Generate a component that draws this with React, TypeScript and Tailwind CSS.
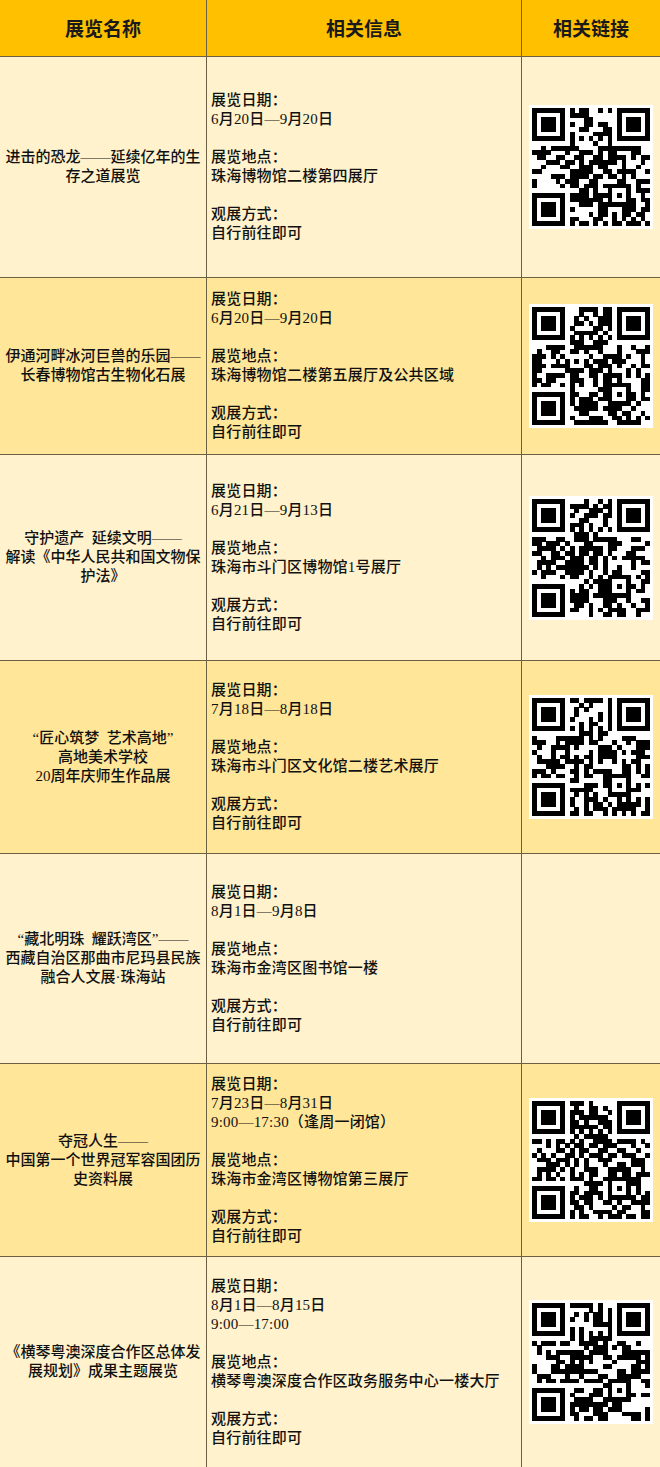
import React from "react";

type Row = {
  name: string[];
  info: string[];
  qr: number | null;
  h: number;
  alt: boolean;
};

const rows: Row[] = [
  {
    name: ["进击的恐龙——延续亿年的生", "存之道展览"],
    info: ["展览日期：", "6月20日—9月20日", "", "展览地点：", "珠海博物馆二楼第四展厅", "", "观展方式：", "自行前往即可"],
    qr: 11,
    h: 220,
    alt: false,
  },
  {
    name: ["伊通河畔冰河巨兽的乐园——", "长春博物馆古生物化石展"],
    info: ["展览日期：", "6月20日—9月20日", "", "展览地点：", "珠海博物馆二楼第五展厅及公共区域", "", "观展方式：", "自行前往即可"],
    qr: 23,
    h: 176,
    alt: true,
  },
  {
    name: ["守护遗产  延续文明——", "解读《中华人民共和国文物保", "护法》"],
    info: ["展览日期：", "6月21日—9月13日", "", "展览地点：", "珠海市斗门区博物馆1号展厅", "", "观展方式：", "自行前往即可"],
    qr: 37,
    h: 205,
    alt: false,
  },
  {
    name: ["“匠心筑梦  艺术高地”", "高地美术学校", "20周年庆师生作品展"],
    info: ["展览日期：", "7月18日—8月18日", "", "展览地点：", "珠海市斗门区文化馆二楼艺术展厅", "", "观展方式：", "自行前往即可"],
    qr: 41,
    h: 192,
    alt: true,
  },
  {
    name: ["“藏北明珠  耀跃湾区”——", "西藏自治区那曲市尼玛县民族", "融合人文展·珠海站"],
    info: ["展览日期：", "8月1日—9月8日", "", "展览地点：", "珠海市金湾区图书馆一楼", "", "观展方式：", "自行前往即可"],
    qr: null,
    h: 209,
    alt: false,
  },
  {
    name: ["夺冠人生——", "中国第一个世界冠军容国团历", "史资料展"],
    info: ["展览日期：", "7月23日—8月31日", "9:00—17:30（逢周一闭馆）", "", "展览地点：", "珠海市金湾区博物馆第三展厅", "", "观展方式：", "自行前往即可"],
    qr: 53,
    h: 192,
    alt: true,
  },
  {
    name: ["《横琴粤澳深度合作区总体发", "展规划》成果主题展览"],
    info: ["展览日期：", "8月1日—8月15日", "9:00—17:00", "", "展览地点：", "横琴粤澳深度合作区政务服务中心一楼大厅", "", "观展方式：", "自行前往即可"],
    qr: 67,
    h: 210,
    alt: false,
  },
];

function makeRng(seed: number) {
  let s = seed * 9301 + 49297;
  return () => {
    s = (s * 1103515245 + 12345) % 2147483648;
    return s / 2147483648;
  };
}

function QR({ seed }: { seed: number }) {
  const N = 25;
  const rnd = makeRng(seed);
  const cells: boolean[][] = [];
  for (let y = 0; y < N; y++) {
    cells.push([]);
    for (let x = 0; x < N; x++) cells[y].push(rnd() < 0.52);
  }
  const finder = (ox: number, oy: number) => {
    for (let y = -1; y < 8; y++)
      for (let x = -1; x < 8; x++) {
        const cx = ox + x;
        const cy = oy + y;
        if (cx < 0 || cy < 0 || cx >= N || cy >= N) continue;
        const inside = x >= 0 && x <= 6 && y >= 0 && y <= 6;
        let on = false;
        if (inside) {
          const ring = x === 0 || x === 6 || y === 0 || y === 6;
          const core = x >= 2 && x <= 4 && y >= 2 && y <= 4;
          on = ring || core;
        }
        cells[cy][cx] = on;
      }
  };
  finder(0, 0);
  finder(N - 7, 0);
  finder(0, N - 7);
  for (let y = 16; y <= 20; y++)
    for (let x = 16; x <= 20; x++) {
      const ring = x === 16 || x === 20 || y === 16 || y === 20;
      cells[y][x] = ring || (x === 18 && y === 18);
    }
  for (let i = 8; i < N - 8; i++) {
    cells[6][i] = i % 2 === 0;
    cells[i][6] = i % 2 === 0;
  }
  const m = 4.7;
  const pad = 3;
  const size = N * m + pad * 2;
  const rects: React.ReactElement[] = [];
  for (let y = 0; y < N; y++)
    for (let x = 0; x < N; x++)
      if (cells[y][x])
        rects.push(
          <rect key={`${x}-${y}`} x={pad + x * m} y={pad + y * m} width={m + 0.05} height={m + 0.05} fill="#000" />
        );
  return (
    <svg width={124} height={124} viewBox={`0 0 ${size} ${size}`} shapeRendering="crispEdges" className="block">
      <rect x={0} y={0} width={size} height={size} fill="#fff" />
      {rects}
    </svg>
  );
}

const textFont = { fontFamily: '"Liberation Serif", "Noto Sans CJK SC", serif' };

export default function App() {
  return (
    <div className="w-[660px] bg-[#fff2cc]" style={textFont}>
      <div className="grid grid-cols-[207px_315px_1fr] h-[57px] bg-[#ffc000] border-b border-[#6b6142] text-[#1a1a1a] text-[19px] font-bold" style={{ fontFamily: '"Noto Sans CJK SC", sans-serif' }}>
        <div className="flex items-center justify-center border-r border-[#6b6142]">展览名称</div>
        <div className="flex items-center justify-center border-r border-[#6b6142]">相关信息</div>
        <div className="flex items-center justify-center">相关链接</div>
      </div>
      {rows.map((r, i) => (
        <div
          key={i}
          className={`grid grid-cols-[207px_315px_1fr] border-b border-[#6b6142] text-[#111111] text-[15px] leading-[19px] font-medium ${r.alt ? "bg-[#ffe699]" : "bg-[#fff2cc]"} ${i === rows.length - 1 ? "border-b-0" : ""}`}
          style={{ height: r.h + (i === rows.length - 1 ? 0 : 1) }}
        >
          <div className="flex flex-col items-center justify-center border-r border-[#6b6142] px-1 text-center">
            {r.name.map((l, j) => (
              <div key={j} className="whitespace-pre">{l}</div>
            ))}
          </div>
          <div className="flex flex-col justify-center border-r border-[#6b6142] pl-[4px] tracking-[0.2px]">
            {r.info.map((l, j) => (
              <div key={j} className="whitespace-pre h-[19px]">{l}</div>
            ))}
          </div>
          <div className="flex items-center justify-center">
            {r.qr !== null && <QR seed={r.qr} />}
          </div>
        </div>
      ))}
    </div>
  );
}
